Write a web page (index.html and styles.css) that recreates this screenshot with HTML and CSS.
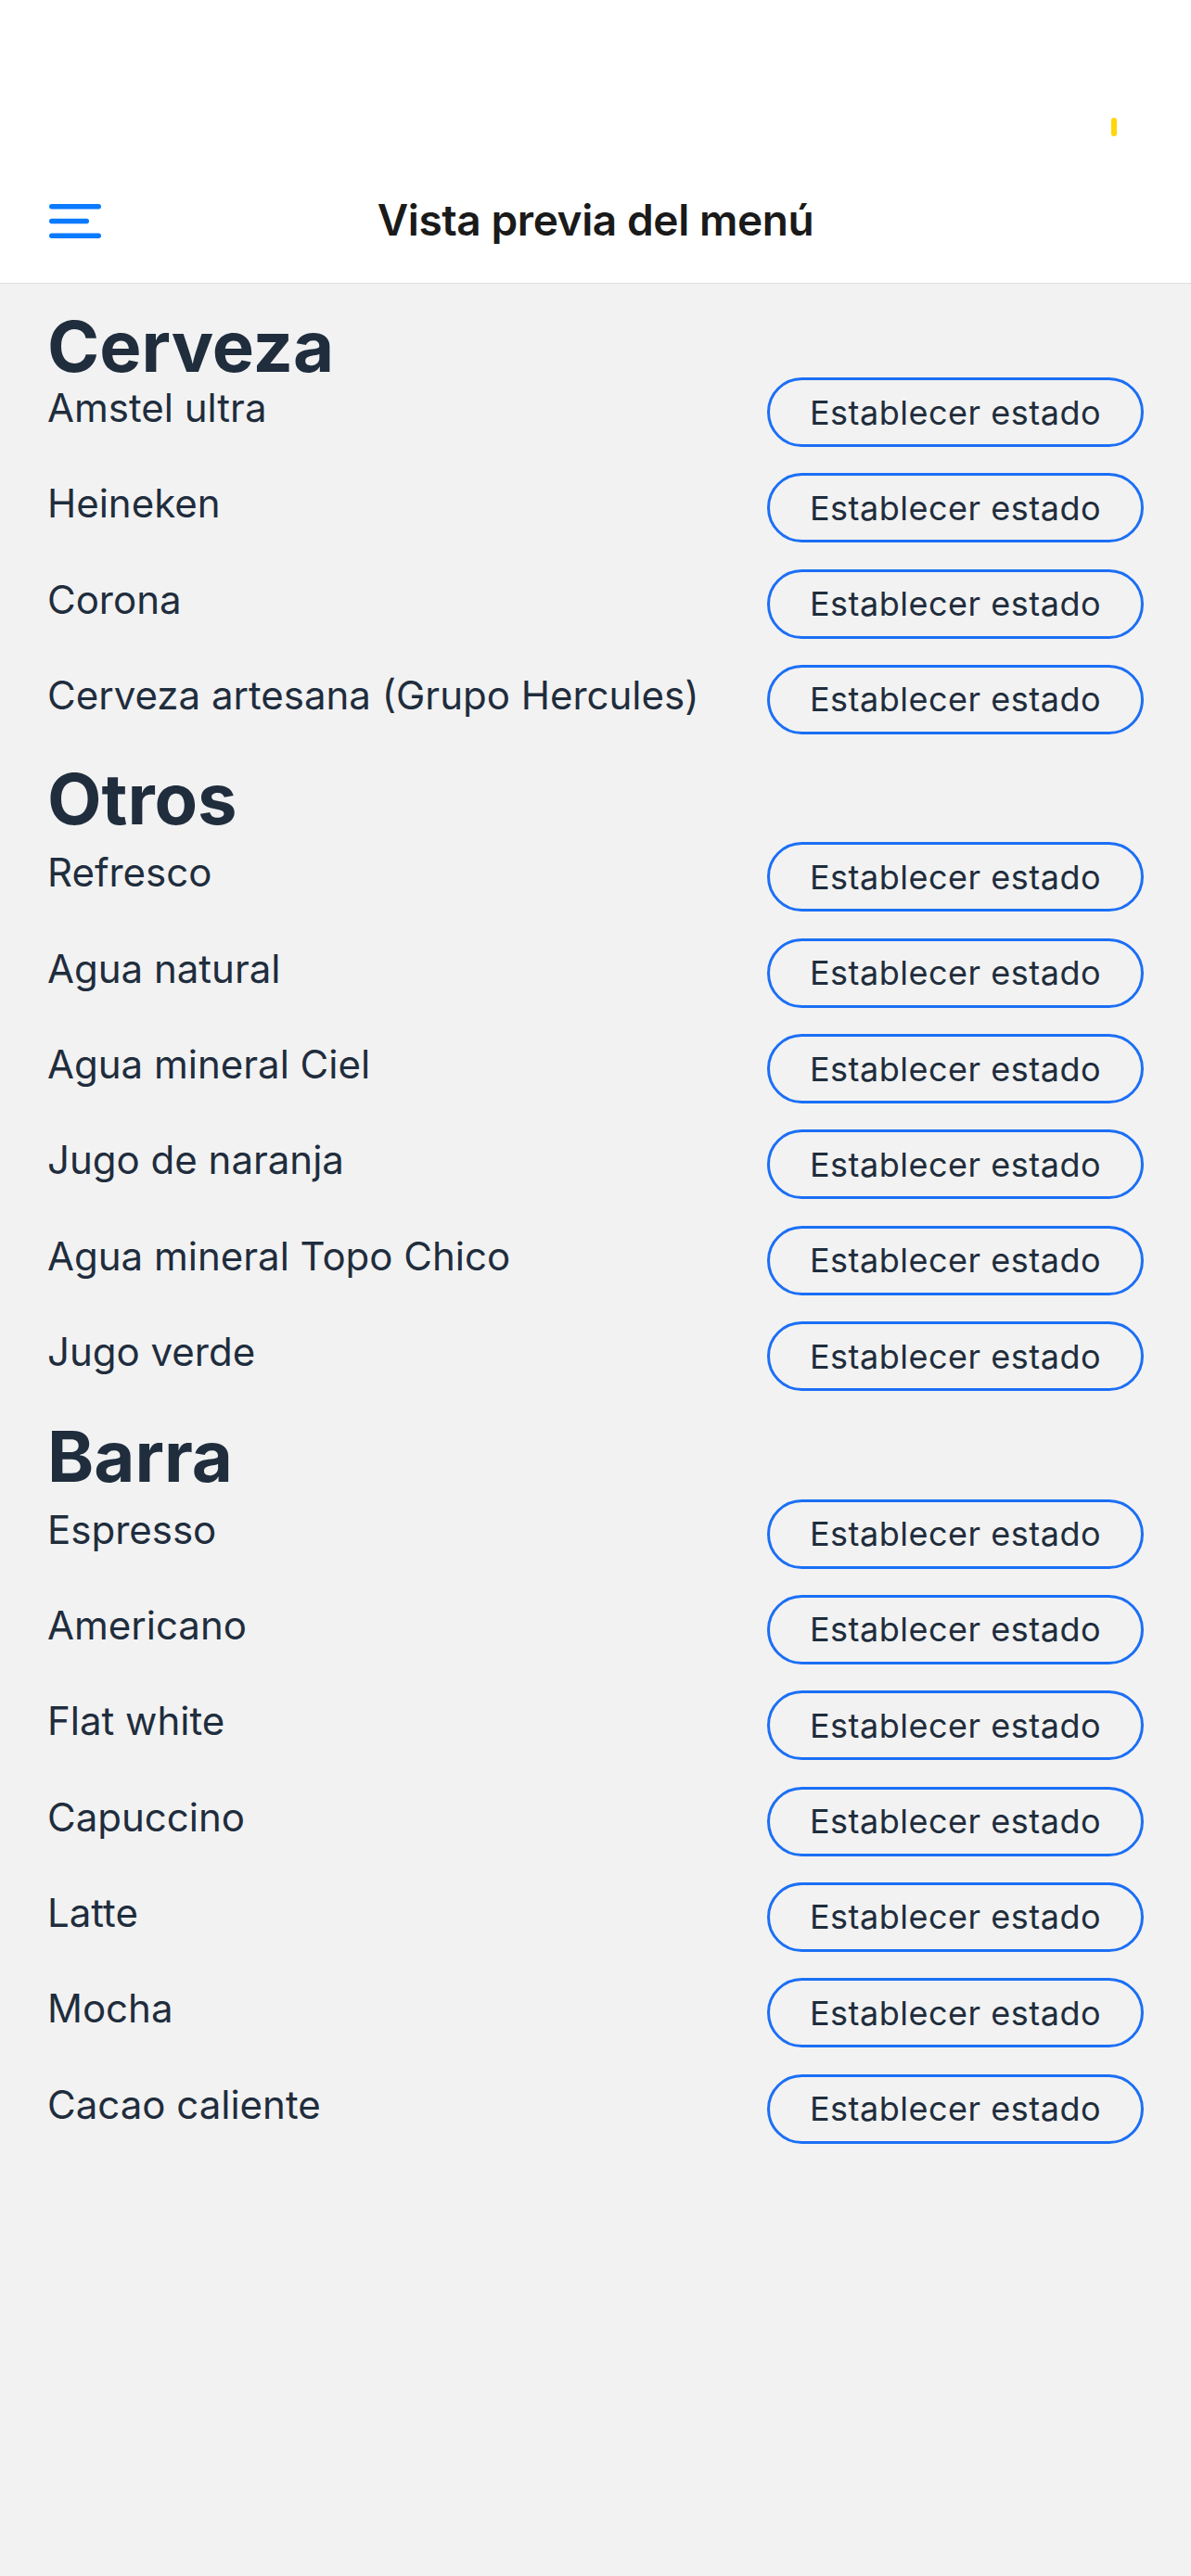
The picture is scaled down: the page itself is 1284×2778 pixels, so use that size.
FILE: index.html
```html
<!DOCTYPE html>
<html lang="es">
<head>
<meta charset="utf-8">
<title>Vista previa del menú</title>
<link rel="stylesheet" href="styles.css">
</head>
<body>
<header class="header">
  <div class="status-bar"><span class="status-pill"></span></div>
  <nav class="nav-bar">
    <button class="menu-btn" aria-label="Menú">
      <svg width="56" height="37" viewBox="0 0 56 37" aria-hidden="true">
        <g stroke="#0a7aff" stroke-width="5.5" stroke-linecap="round" fill="none">
          <line x1="2.75" y1="2.75" x2="53.25" y2="2.75"/>
          <line x1="2.75" y1="18.5" x2="40.25" y2="18.5"/>
          <line x1="2.75" y1="34.25" x2="53.25" y2="34.25"/>
        </g>
      </svg>
    </button>
    <h1 class="nav-title">Vista previa del menú</h1>
    <span class="nav-spacer"></span>
  </nav>
</header>
<main class="content">
  <section class="section">
    <h2 class="section-title">Cerveza</h2>
    <ul class="item-list">
      <li class="item"><span class="item-name">Amstel ultra</span><button class="status-btn">Establecer estado</button></li>
      <li class="item"><span class="item-name">Heineken</span><button class="status-btn">Establecer estado</button></li>
      <li class="item"><span class="item-name">Corona</span><button class="status-btn">Establecer estado</button></li>
      <li class="item"><span class="item-name">Cerveza artesana (Grupo Hercules)</span><button class="status-btn">Establecer estado</button></li>
    </ul>
  </section>
  <section class="section">
    <h2 class="section-title">Otros</h2>
    <ul class="item-list">
      <li class="item"><span class="item-name">Refresco</span><button class="status-btn">Establecer estado</button></li>
      <li class="item"><span class="item-name">Agua natural</span><button class="status-btn">Establecer estado</button></li>
      <li class="item"><span class="item-name">Agua mineral Ciel</span><button class="status-btn">Establecer estado</button></li>
      <li class="item"><span class="item-name">Jugo de naranja</span><button class="status-btn">Establecer estado</button></li>
      <li class="item"><span class="item-name">Agua mineral Topo Chico</span><button class="status-btn">Establecer estado</button></li>
      <li class="item"><span class="item-name">Jugo verde</span><button class="status-btn">Establecer estado</button></li>
    </ul>
  </section>
  <section class="section">
    <h2 class="section-title">Barra</h2>
    <ul class="item-list">
      <li class="item"><span class="item-name">Espresso</span><button class="status-btn">Establecer estado</button></li>
      <li class="item"><span class="item-name">Americano</span><button class="status-btn">Establecer estado</button></li>
      <li class="item"><span class="item-name">Flat white</span><button class="status-btn">Establecer estado</button></li>
      <li class="item"><span class="item-name">Capuccino</span><button class="status-btn">Establecer estado</button></li>
      <li class="item"><span class="item-name">Latte</span><button class="status-btn">Establecer estado</button></li>
      <li class="item"><span class="item-name">Mocha</span><button class="status-btn">Establecer estado</button></li>
      <li class="item"><span class="item-name">Cacao caliente</span><button class="status-btn">Establecer estado</button></li>
    </ul>
  </section>
</main>
</body>
</html>
```
FILE: styles.css
```css
* {
  box-sizing: border-box;
}

html, body {
  margin: 0;
  padding: 0;
}

body {
  min-height: 100vh;
  background: #f2f2f2;
  font-family: Inter, "Noto Sans", "Liberation Sans", sans-serif;
  color: #1f2d3d;
}

.header {
  background: #ffffff;
  border-bottom: 1px solid #dedede;
  padding-bottom: 21px;
}

.status-bar {
  height: 190px;
  display: flex;
  justify-content: flex-end;
  align-items: flex-start;
  padding-top: 127px;
  padding-right: 80px;
}

.status-pill {
  display: block;
  width: 6px;
  height: 20px;
  border-radius: 3px;
  background: #ffd60a;
}

.nav-bar {
  height: 94px;
  display: grid;
  grid-template-columns: 1fr auto 1fr;
  align-items: center;
  padding: 0 53px;
}

.menu-btn {
  justify-self: start;
  background: none;
  border: 0;
  padding: 0;
  margin: 2px 0 0 0;
  display: flex;
  cursor: pointer;
}

.nav-title {
  margin: 0;
  font-size: 46px;
  font-weight: 600;
  line-height: 60px;
  letter-spacing: -0.4px;
  color: #1a1a1a;
}

.content {
  padding: 33px 51px 0 51px;
  display: flex;
  flex-direction: column;
  gap: 35.5px;
}

.section {
  display: flex;
  flex-direction: column;
}

.section-title {
  margin: 0 0 13px 0;
  font-size: 76px;
  font-weight: 700;
  line-height: 68px;
  color: #1f2d3d;
}

.section:first-child .section-title {
  margin-bottom: 0;
}

.item-list {
  list-style: none;
  margin: 0;
  padding: 0;
  display: flex;
  flex-direction: column;
  gap: 28.33px;
}

.item {
  height: 75px;
  display: flex;
  justify-content: space-between;
  align-items: flex-start;
}

.item-name {
  font-size: 42px;
  line-height: 66px;
  font-weight: 400;
  color: #1f2d3d;
}

.status-btn {
  width: 406px;
  height: 75px;
  border: 3px solid #1b6ff5;
  border-radius: 38px;
  background: transparent;
  font-family: Inter, "Noto Sans", "Liberation Sans", sans-serif;
  font-size: 36px;
  font-weight: 400;
  letter-spacing: 0.5px;
  color: #1f2d3d;
  padding: 0;
  cursor: pointer;
}
```
